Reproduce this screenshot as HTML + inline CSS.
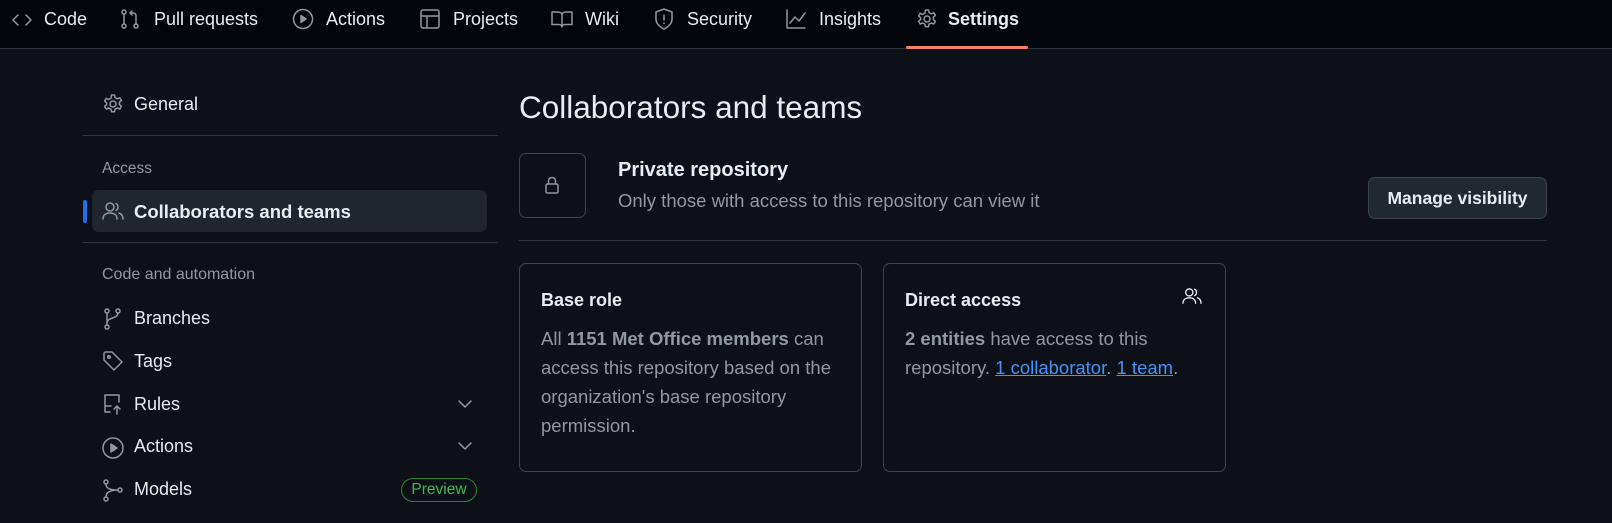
<!DOCTYPE html>
<html><head><meta charset="utf-8"><style>
*{margin:0;padding:0;box-sizing:border-box}
body{width:1612px;height:523px;background:#0d1117;font-family:"Liberation Sans",sans-serif;color:#e6edf3;position:relative;overflow:hidden;font-size:18px}
.a{position:absolute;white-space:nowrap}
.hdr{position:absolute;left:0;top:0;width:1612px;height:49px;background:#010409;border-bottom:1px solid #30363d}
svg{position:absolute;fill:none;stroke:#9198a1;stroke-width:1.5;stroke-linecap:round;stroke-linejoin:round}
.m{color:#9198a1}
.box{position:absolute;border:1px solid #3d444d;border-radius:7px}
a{color:#4493f8;text-decoration:underline}
</style></head><body>
<div class="hdr"></div>
<svg style="left:11px;top:10px" width="22" height="20" viewBox="0 0 22 20"><path d="M7 5L2 10l5 5M15 5l5 5-5 5"/></svg>
<div class="a" style="left:44px;top:9px">Code</div>
<svg style="left:119px;top:8px" width="22" height="22" viewBox="0 0 22 22"><circle cx="5" cy="4" r="2"/><circle cx="5" cy="18" r="2"/><circle cx="17" cy="18" r="2"/><path d="M5 6v10M17 16V8c0-2-1-3-3-3h-3M13 3l-2 2 2 2"/></svg>
<div class="a" style="left:154px;top:9px">Pull requests</div>
<svg style="left:292px;top:8px" width="22" height="22" viewBox="0 0 22 22"><circle cx="11" cy="11" r="9.5"/><path d="M9 7.5v7l5-3.5z" fill="#9198a1"/></svg>
<div class="a" style="left:326px;top:9px">Actions</div>
<svg style="left:419px;top:8px" width="22" height="22" viewBox="0 0 22 22"><rect x="2" y="2" width="18" height="18" rx="2"/><path d="M2 8h18M8 8v12"/></svg>
<div class="a" style="left:453px;top:9px">Projects</div>
<svg style="left:550px;top:9px" width="24" height="20" viewBox="0 0 24 20"><path d="M2 3h6c2 0 4 1 4 3v12c0-1.5-1.5-2.5-3-2.5H2zM22 3h-6c-2 0-4 1-4 3v12c0-1.5 1.5-2.5 3-2.5h7z"/></svg>
<div class="a" style="left:585px;top:9px">Wiki</div>
<svg style="left:653px;top:7px" width="22" height="24" viewBox="0 0 22 24"><path d="M11 2l8 3v7c0 5-4 8-8 10-4-2-8-5-8-10V5z"/><path d="M11 8v5M11 16v.5"/></svg>
<div class="a" style="left:687px;top:9px">Security</div>
<svg style="left:785px;top:8px" width="22" height="22" viewBox="0 0 22 22"><path d="M2 2v18h18M5 15l5-6 4 4 6-8"/></svg>
<div class="a" style="left:819px;top:9px">Insights</div>
<svg style="left:916px;top:8px" width="22" height="22" viewBox="0 0 22 22"><circle cx="11" cy="11" r="3"/><path d="M9.5 2h3l.6 2.6 2.2 1.2 2.5-1 1.6 2.6-2 1.8v2.4l2 1.8-1.6 2.6-2.5-1-2.2 1.2-.6 2.6h-3l-.6-2.6-2.2-1.2-2.5 1-1.6-2.6 2-1.8V9.8l-2-1.8 1.6-2.6 2.5 1 2.2-1.2z"/></svg>
<div class="a" style="left:948px;top:9px;font-weight:bold">Settings</div>
<div class="a" style="left:906px;top:46px;width:122px;height:3px;background:#f78166;border-radius:2px"></div>

<svg style="left:102px;top:93px" width="22" height="22" viewBox="0 0 22 22"><circle cx="11" cy="11" r="3"/><path d="M9.5 2h3l.6 2.6 2.2 1.2 2.5-1 1.6 2.6-2 1.8v2.4l2 1.8-1.6 2.6-2.5-1-2.2 1.2-.6 2.6h-3l-.6-2.6-2.2-1.2-2.5 1-1.6-2.6 2-1.8V9.8l-2-1.8 1.6-2.6 2.5 1 2.2-1.2z"/></svg>
<div class="a" style="left:134px;top:94px">General</div>
<div class="a" style="left:83px;top:135px;width:415px;height:1px;background:#30363d"></div>
<div class="a m" style="left:102px;top:160px;font-size:15.5px">Access</div>
<div class="a" style="left:92px;top:190px;width:395px;height:42px;background:#21262d;border-radius:7px"></div>
<div class="a" style="left:83px;top:200px;width:4px;height:23px;background:#1f6feb;border-radius:2px"></div>
<svg style="left:102px;top:201px" width="22" height="20" viewBox="0 0 22 20"><circle cx="8" cy="6" r="4"/><path d="M1 18c0-4 3-6 7-6s7 2 7 6M14 2.5a4 4 0 0 1 0 7M17 12c2.5 1 4 3 4 6"/></svg>
<div class="a" style="left:134px;top:201px;font-weight:bold;font-size:18.5px">Collaborators and teams</div>
<div class="a" style="left:83px;top:242px;width:415px;height:1px;background:#30363d"></div>
<div class="a m" style="left:102px;top:266px;font-size:16px">Code and automation</div>
<svg style="left:102px;top:307px" width="22" height="24" viewBox="0 0 22 24"><circle cx="5" cy="4" r="2"/><circle cx="5" cy="20" r="2"/><circle cx="16" cy="4" r="2"/><path d="M5 6v12M16 6c0 6-11 4-11 10"/></svg>
<div class="a" style="left:134px;top:308px">Branches</div>
<svg style="left:102px;top:350px" width="22" height="22" viewBox="0 0 22 22"><path d="M2 3v7l10 10 8-8L10 2H3z"/><circle cx="7" cy="7" r="1.3"/></svg>
<div class="a" style="left:134px;top:351px">Tags</div>
<svg style="left:102px;top:392px" width="22" height="24" viewBox="0 0 22 24"><path d="M8 20H3V3h14v7M3 14h6M15 22v-8M12 17l3-3 3 3"/></svg>
<div class="a" style="left:134px;top:394px">Rules</div>
<svg style="left:457px;top:398px" width="16" height="12" viewBox="0 0 16 12"><path d="M2 3l6 6 6-6"/></svg>
<svg style="left:101px;top:436px" width="24" height="24" viewBox="0 0 24 24"><circle cx="12" cy="12" r="10"/><path d="M10 8v8l6-4z" fill="#9198a1"/></svg>
<div class="a" style="left:134px;top:436px">Actions</div>
<svg style="left:457px;top:440px" width="16" height="12" viewBox="0 0 16 12"><path d="M2 3l6 6 6-6"/></svg>
<svg style="left:102px;top:478px" width="22" height="24" viewBox="0 0 22 24"><circle cx="4" cy="4" r="2"/><circle cx="4" cy="21" r="2"/><circle cx="18" cy="12" r="2"/><path d="M4 6c0 4 3 6 12 6M4 19c0-4 3-7 12-7"/></svg>
<div class="a" style="left:134px;top:479px">Models</div>
<div class="a" style="left:401px;top:478px;width:76px;height:24px;border:1px solid #238636;border-radius:12px;color:#3fb950;font-size:15.5px;text-align:center;line-height:22px">Preview</div>

<div class="a" style="left:519px;top:89px;font-size:31.5px">Collaborators and teams</div>
<div class="box" style="left:519px;top:153px;width:67px;height:65px"></div>
<svg style="left:543px;top:175px" width="18" height="20" viewBox="0 0 18 20"><rect x="3" y="9" width="12" height="9" rx="1.5"/><path d="M5.5 9V6a3.5 3.5 0 0 1 7 0v3"/></svg>
<div class="a" style="left:618px;top:159px;font-size:20px;font-weight:bold">Private repository</div>
<div class="a m" style="left:618px;top:190px;font-size:18.5px">Only those with access to this repository can view it</div>
<div class="a" style="left:1368px;top:177px;width:179px;height:42px;background:#212830;border:1px solid #3d444d;border-radius:7px;font-weight:bold;text-align:center;line-height:40px;font-size:17.5px">Manage visibility</div>
<div class="a" style="left:519px;top:240px;width:1028px;height:1px;background:#30363d"></div>
<div class="box" style="left:519px;top:263px;width:343px;height:209px"></div>
<div class="a" style="left:541px;top:290px;font-weight:bold">Base role</div>
<div class="a m" style="left:541px;top:324px;line-height:29px;white-space:normal;width:310px;font-size:18.5px">All <b style="color:#9198a1">1151 Met Office members</b> can access this repository based on the organization's base repository permission.</div>
<div class="box" style="left:883px;top:263px;width:343px;height:209px"></div>
<div class="a" style="left:905px;top:290px;font-weight:bold">Direct access</div>
<svg style="left:1181px;top:287px" width="22" height="18" viewBox="0 0 22 20"><circle cx="8" cy="6" r="4" stroke="#e6edf3"/><path d="M1 18c0-4 3-6 7-6s7 2 7 6M14 2.5a4 4 0 0 1 0 7M17 12c2.5 1 4 3 4 6" stroke="#e6edf3"/></svg>
<div class="a m" style="left:905px;top:324px;line-height:29px;white-space:normal;width:300px;font-size:18.5px"><b style="color:#9198a1">2 entities</b> have access to this repository. <a>1 collaborator</a>. <a>1 team</a>.</div>
</body></html>
